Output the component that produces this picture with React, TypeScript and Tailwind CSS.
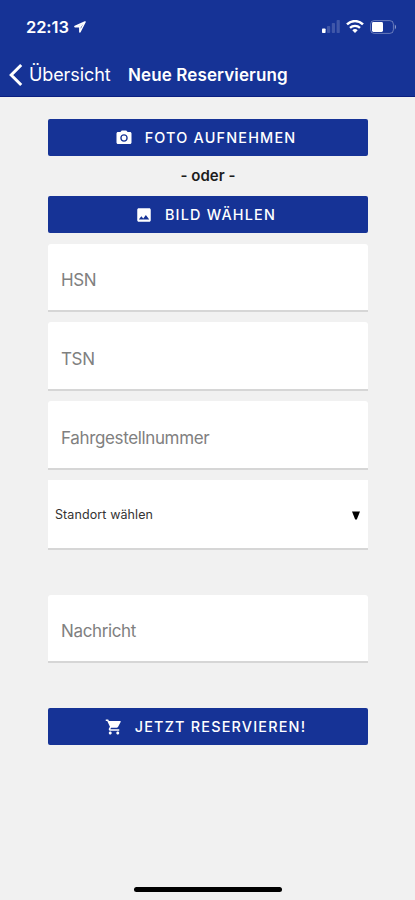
import React, { useState } from "react";
import type { IconType } from "react-icons";
import { MdImage, MdPhotoCamera, MdShoppingCart } from "react-icons/md";
import clsx from "clsx";

type ActionButtonProps = {
  icon: IconType;
  label: string;
  className?: string;
};

const StatusBar = () => {
  return (
    <div className="flex h-[53px] items-center justify-between pr-[18px] pl-[26px]">
      <div className="flex items-center gap-[5px] pt-px">
        <span className="text-[16.5px] leading-5 font-semibold tracking-[-0.1px]">
          22:13
        </span>
        <svg width="12" height="12" viewBox="0 0 12 12">
          <path
            d="M11 1 1 5.6h4.9V11z"
            fill="none"
            stroke="currentColor"
            strokeWidth="1.6"
            strokeLinejoin="round"
          />
          <path d="M11 1 5 4.6l1.5 2.2z" fill="currentColor" />
        </svg>
      </div>
      <div className="flex items-center">
        {/* signal */}
        <svg width="18" height="13" viewBox="0 0 18 13" fill="currentColor">
          <rect x="0" y="8.5" width="3.6" height="4.5" rx="0.8" />
          <rect x="5" y="6" width="3.2" height="7" rx="0.8" opacity="0.18" />
          <rect x="9.8" y="3" width="3.2" height="10" rx="0.8" opacity="0.18" />
          <rect x="14.6" y="0" width="3.2" height="13" rx="0.8" opacity="0.18" />
        </svg>
        {/* wifi */}
        <svg
          className="ml-[6px]"
          width="18"
          height="13"
          viewBox="0 0 18 13"
          fill="none"
          stroke="currentColor"
        >
          <path d="M1 4.4a11.4 11.4 0 0 1 16 0" strokeWidth="2.5" />
          <path d="M4 7.8a7.2 7.2 0 0 1 10 0" strokeWidth="2.3" />
          <path
            d="M9 13 6.3 10.2a3.9 3.9 0 0 1 5.4 0z"
            fill="currentColor"
            stroke="none"
          />
        </svg>
        {/* battery */}
        <svg className="ml-[6px]" width="27" height="14" viewBox="0 0 27 14">
          <rect
            x="0.6"
            y="0.6"
            width="22.8"
            height="12.8"
            rx="3.6"
            fill="none"
            stroke="currentColor"
            strokeOpacity="0.35"
          />
          <path
            d="M24.8 4.6c1.6.7 1.6 4.1 0 4.8z"
            fill="currentColor"
            opacity="0.5"
          />
          <rect x="2" y="2" width="11" height="10" rx="1.4" fill="currentColor" />
        </svg>
      </div>
    </div>
  );
};

const NavBar = () => {
  return (
    <nav className="flex h-[43px] items-center pl-[9px]">
      <button type="button" className="flex items-center">
        <svg width="14" height="24" viewBox="0 0 14 24" fill="none">
          <path
            d="M12.2 2 2.2 12l10 10"
            stroke="currentColor"
            strokeWidth="3"
          />
        </svg>
        <span className="ml-[6px] w-[99px] text-left text-[18px] tracking-[-0.1px]">
          Übersicht
        </span>
      </button>
      <h1 className="pt-[3px] text-[17px] font-semibold tracking-[0.12px]">
        Neue Reservierung
      </h1>
    </nav>
  );
};

const ActionButton = ({ icon: Icon, label, className }: ActionButtonProps) => {
  return (
    <button
      type="button"
      className={clsx(
        "flex h-[37px] w-full items-center justify-center gap-[12px] rounded-[2px] bg-[#163396] pr-[5px] text-white",
        className
      )}
    >
      <Icon size={18} />
      <span className="text-[14.4px] font-medium tracking-[1.2px] whitespace-nowrap">
        {label}
      </span>
    </button>
  );
};

const Field = ({ label, className }: { label: string; className?: string }) => {
  return (
    <div
      className={clsx(
        "flex items-center rounded-t-[3px] border-b-2 border-[#d6d6d6] bg-white pt-[8px] pl-[13px] text-[17px] tracking-[-0.36px] text-[#808080]",
        className
      )}
    >
      {label}
    </div>
  );
};

const App = () => {
  const [location] = useState("Standort wählen");

  return (
    <div className="flex h-[900px] w-full flex-col bg-[#f1f1f1] font-['Inter','Liberation_Sans',sans-serif]">
      <header className="h-[97px] border-b border-[#0a1f80] bg-[#163396] text-white">
        <StatusBar />
        <NavBar />
      </header>

      <main className="flex-1 pt-[22px] pr-[47px] pl-[48px]">
        <ActionButton icon={MdPhotoCamera} label="FOTO AUFNEHMEN" />
        <div className="flex h-10 items-center justify-center text-[15px] font-semibold text-[#1c1c1c]">
          - oder -
        </div>
        <ActionButton icon={MdImage} label="BILD WÄHLEN" />

        <Field label="HSN" className="mt-[11px] h-[68px]" />
        <Field label="TSN" className="mt-[10px] h-[69px]" />
        <Field label="Fahrgestellnummer" className="mt-[10px] h-[69px]" />

        {/* location select */}
        <button
          type="button"
          className="mt-[10px] flex h-[70px] w-full items-center justify-between border-b-2 border-[#d6d6d6] bg-white pt-[2px] pr-[8px] pl-[7px] text-[12.5px] tracking-[0.1px] text-[#333333]"
        >
          {location}
          <svg width="8" height="9" viewBox="0 0 8 9">
            <path d="M0 .5h8L4.8 8.5H3.2z" fill="#000000" />
          </svg>
        </button>

        <Field label="Nachricht" className="mt-[45px] h-[68px]" />

        <ActionButton
          icon={MdShoppingCart}
          label="JETZT RESERVIEREN!"
          className="mt-[45px]"
        />
      </main>

      <div className="mb-[8px] ml-[134px] h-[5px] w-[148px] rounded-full bg-black" />
    </div>
  );
};

export default App;
